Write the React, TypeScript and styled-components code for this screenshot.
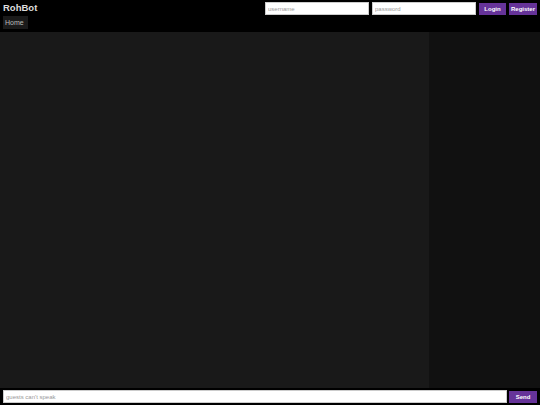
import React from "react";
import styled, { createGlobalStyle } from "styled-components";

const Global = createGlobalStyle`
  html, body { margin: 0; padding: 0; height: 100%; background: #000; }
  #root { height: 100%; }
  * { box-sizing: border-box; }
  body { font-family: "Liberation Sans", Arial, sans-serif; }
`;

const Page = styled.div`
  display: flex;
  flex-direction: column;
  height: 405px;
  width: 540px;
  background: #000;
`;

const Header = styled.header`
  display: flex;
  justify-content: space-between;
  align-items: flex-start;
  height: 32px;
  padding: 2px 3px 0 3px;
`;

const Brand = styled.div`
  display: flex;
  flex-direction: column;
  gap: 2px;
`;

const Title = styled.h1`
  margin: 0;
  font-size: 9.5px;
  line-height: 12px;
  font-weight: bold;
  color: #ddd;
`;

const Tabs = styled.div`
  display: flex;
`;

const Tab = styled.div`
  background: #1a1a1a;
  color: #bbb;
  font-size: 7px;
  line-height: 13px;
  height: 13px;
  padding: 0 2px;
  width: 25px;
`;

const LoginForm = styled.form`
  display: flex;
  gap: 3px;
  align-items: center;
`;

const TextInput = styled.input<{ $w: number }>`
  width: ${(p) => p.$w}px;
  height: 13px;
  border: 1px solid #ccc;
  background: #fff;
  font-family: "Liberation Sans", Arial, sans-serif;
  font-size: 6px;
  padding: 0 2px;
  outline: none;
  &::placeholder { color: #999; }
`;

const Button = styled.button<{ $w: number }>`
  width: ${(p) => p.$w}px;
  height: 12px;
  border: none;
  background: #663399;
  color: #fff;
  font-family: "Liberation Sans", Arial, sans-serif;
  font-size: 6px;
  font-weight: bold;
  padding: 0;
`;

const Main = styled.main`
  flex: 1;
  display: flex;
  min-height: 0;
`;

const ChatArea = styled.section`
  flex: 1;
  background: #191919;
`;

const UserList = styled.aside`
  width: 111px;
  background: #111;
`;

const Footer = styled.footer`
  display: flex;
  align-items: center;
  gap: 2px;
  height: 17px;
  padding: 0 3px;
`;

const MessageInput = styled.input`
  flex: 1;
  height: 13px;
  border: 1px solid #ccc;
  background: #fff;
  font-family: "Liberation Sans", Arial, sans-serif;
  font-size: 6px;
  padding: 0 2px;
  outline: none;
  &::placeholder { color: #999; }
`;

export default function App() {
  return (
    <>
      <Global />
      <Page>
        <Header>
          <Brand>
            <Title>RohBot</Title>
            <Tabs>
              <Tab>Home</Tab>
            </Tabs>
          </Brand>
          <LoginForm onSubmit={(e) => e.preventDefault()}>
            <TextInput $w={104} placeholder="username" />
            <TextInput $w={104} type="password" placeholder="password" />
            <Button $w={27}>Login</Button>
            <Button $w={28}>Register</Button>
          </LoginForm>
        </Header>
        <Main>
          <ChatArea />
          <UserList />
        </Main>
        <Footer>
          <MessageInput placeholder="guests can't speak" />
          <Button $w={28}>Send</Button>
        </Footer>
      </Page>
    </>
  );
}
